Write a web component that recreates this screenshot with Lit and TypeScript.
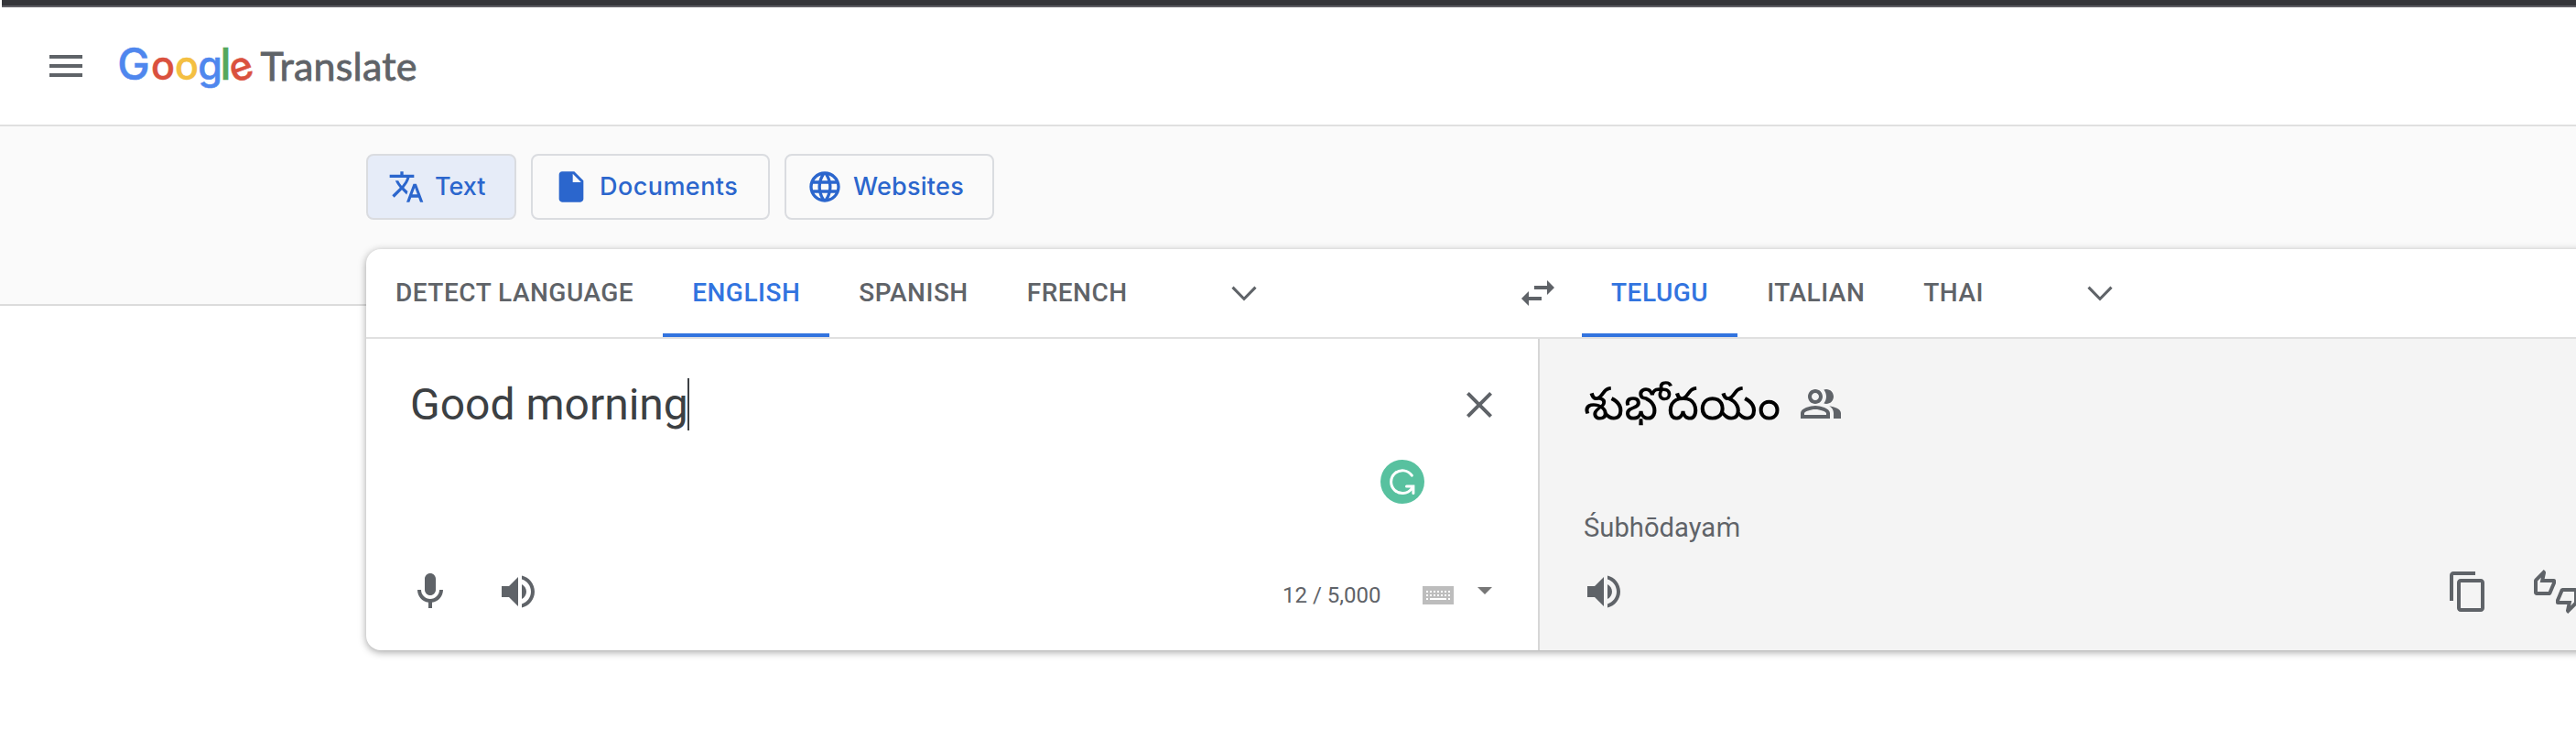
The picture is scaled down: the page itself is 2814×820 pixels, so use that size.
import { LitElement, html, svg, css } from "lit";
import { customElement, property } from "lit/decorators.js";

const ICONS: Record<string, string> = {
  menu: "M3 18h18v-2H3v2zm0-5h18v-2H3v2zm0-7v2h18V6H3z",
  translate:
    "M12.87 15.07l-2.54-2.51.03-.03c1.74-1.94 2.98-4.17 3.71-6.53H17V4h-7V2H8v2H1v1.99h11.17C11.5 7.92 10.44 9.75 9 11.35 8.07 10.32 7.3 9.19 6.69 8h-2c.73 1.63 1.73 3.17 2.98 4.56l-5.09 5.02L4 19l5-5 3.11 3.11.76-2.04zM18.5 10h-2L12 22h2l1.12-3h4.75L21 22h2l-4.5-12zm-2.62 7l1.62-4.33L19.12 17h-3.24z",
  doc: "M6 2c-1.1 0-1.99.9-1.99 2L4 20c0 1.1.89 2 1.99 2H18c1.1 0 2-.9 2-2V8l-6-6H6zm7 7V3.5L18.5 9H13z",
  globe:
    "M11.99 2C6.47 2 2 6.48 2 12s4.47 10 9.99 10C17.52 22 22 17.52 22 12S17.52 2 11.99 2zm6.93 6h-2.95c-.32-1.25-.78-2.45-1.38-3.56 1.84.63 3.37 1.91 4.33 3.56zM12 4.04c.83 1.2 1.48 2.53 1.91 3.96h-3.82c.43-1.43 1.08-2.76 1.91-3.96zM4.26 14C4.1 13.36 4 12.69 4 12s.1-1.36.26-2h3.38c-.08.66-.14 1.32-.14 2s.06 1.34.14 2H4.26zm.82 2h2.95c.32 1.25.78 2.45 1.38 3.56-1.84-.63-3.37-1.9-4.33-3.56zm2.95-8H5.08c.96-1.66 2.49-2.93 4.33-3.56C8.81 5.55 8.35 6.75 8.03 8zM12 19.96c-.83-1.2-1.48-2.53-1.91-3.96h3.82c-.43 1.43-1.08 2.76-1.91 3.96zM14.34 14H9.66c-.09-.66-.16-1.32-.16-2s.07-1.35.16-2h4.68c.09.65.16 1.32.16 2s-.07 1.34-.16 2zm.25 5.56c.6-1.11 1.06-2.31 1.38-3.56h2.95c-.96 1.65-2.49 2.93-4.33 3.56zM16.36 14c.08-.66.14-1.32.14-2s-.06-1.34-.14-2h3.38c.16.64.26 1.31.26 2s-.1 1.36-.26 2h-3.38z",
  swap: "M6.99 11L3 15l3.99 4v-3H14v-2H6.99v-3zM21 9l-3.99-4v3H10v2h7.01v3L21 9z",
  chevron: "M6.3 8.3L12 14.1l5.7-5.8 1.1 1.1L12 16.3 5.2 9.4z",
  close:
    "M19 6.41L17.59 5 12 10.59 6.41 5 5 6.41 10.59 12 5 17.59 6.41 19 12 13.41 17.59 19 19 17.59 13.41 12z",
  mic: "M12 14c1.66 0 3-1.34 3-3V5c0-1.66-1.34-3-3-3S9 3.34 9 5v6c0 1.66 1.34 3 3 3zM17 11c0 2.76-2.24 5-5 5s-5-2.24-5-5H5c0 3.53 2.61 6.43 6 6.92V21h2v-3.08c3.39-.49 6-3.39 6-6.92h-2z",
  speaker:
    "M3 9v6h4l5 5V4L7 9H3zm13.5 3c0-1.77-1.02-3.29-2.5-4.03v8.05c1.48-.73 2.5-2.25 2.5-4.02zM14 3.23v2.06c2.89.86 5 3.54 5 6.71s-2.11 5.85-5 6.71v2.06c4.01-.91 7-4.49 7-8.77s-2.99-7.86-7-8.77z",
  people:
    "M16.67 13.13C18.04 14.06 19 15.32 19 17v3h4v-3c0-2.18-3.57-3.47-6.33-3.87zM15 12c2.21 0 4-1.79 4-4s-1.79-4-4-4c-.47 0-.91.1-1.33.24C14.5 5.27 15 6.58 15 8s-.5 2.73-1.33 3.76c.42.14.86.24 1.33.24zM9 12c2.21 0 4-1.79 4-4s-1.79-4-4-4-4 1.79-4 4 1.79 4 4 4zm0-6c1.1 0 2 .9 2 2s-.9 2-2 2-2-.9-2-2 .9-2 2-2zM9 13c-2.67 0-8 1.34-8 4v3h16v-3c0-2.66-5.33-4-8-4zm6 5H3v-.99C3.2 16.29 6.3 15 9 15s5.8 1.29 6 2v1z",
  copy: "M16 1H4c-1.1 0-2 .9-2 2v14h2V3h12V1zm3 4H8c-1.1 0-2 .9-2 2v14c0 1.1.9 2 2 2h11c1.1 0 2-.9 2-2V7c0-1.1-.9-2-2-2zm0 16H8V7h11v14z",
  thumbs:
    "M12 6c0-.55-.45-1-1-1H5.82l.66-3.18.02-.23c0-.31-.13-.59-.33-.8L5.38 0 .44 4.94C.17 5.21 0 5.59 0 6v6.5c0 .83.67 1.5 1.5 1.5h6.75c.62 0 1.15-.38 1.38-.91l2.26-5.29c.07-.17.11-.36.11-.55V6zm-2 1.13L7.92 12H2V6.21l1.93-1.93L3.36 7H10v.13zM22.5 10h-6.75c-.62 0-1.15.38-1.38.91l-2.26 5.29c-.07.17-.11.36-.11.55V18c0 .55.45 1 1 1h5.18l-.66 3.18-.02.24c0 .31.13.59.33.8l.79.78 4.94-4.94c.27-.27.44-.65.44-1.06v-6.5c0-.83-.67-1.5-1.5-1.5zm-.5 7.79l-1.93 1.93.57-2.72H14v-.13L16.08 12H22v5.79z",
};

@customElement("gt-icon")
export class GtIcon extends LitElement {
  @property() name = "menu";

  static styles = css`
    :host {
      display: block;
      flex: none;
      width: 48px;
      height: 48px;
    }
    svg {
      display: block;
      width: 100%;
      height: 100%;
      fill: currentColor;
    }
  `;

  render() {
    return html`<svg viewBox="0 0 24 24"><path d=${ICONS[this.name]} /></svg>`;
  }
}

function keyColumn(i: number) {
  const x = 4 + i * 4;
  return svg`<rect x=${x} y="5" width="2" height="2" fill="#fff"/><rect x=${x} y="9" width="2" height="2" fill="#fff"/>${
    i === 0 || i === 6 ? svg`<rect x=${x} y="13" width="2" height="2" fill="#fff"/>` : ""
  }`;
}

@customElement("app-root")
export class AppRoot extends LitElement {
  static styles = css`
    :host {
      display: block;
      height: 820px;
      overflow: hidden;
      background: #fff;
      color: #5f6368;
      font-family: Roboto, "Noto Sans", sans-serif;
    }
    .topbar {
      box-sizing: border-box;
      height: 8px;
      margin-left: 2px;
      background: #35363a;
      border-bottom: 2px solid #5f5f65;
    }
    .header {
      box-sizing: border-box;
      height: 130px;
      display: flex;
      align-items: flex-start;
      padding: 40px 0 0 48px;
      border-bottom: 2px solid #e0e0e0;
    }
    .logo {
      flex: none;
      display: block;
      margin: -8px 0 0 24px;
    }
    .blue { fill: #4f87ee; stroke: #4f87ee; }
    .red { fill: #da513e; stroke: #da513e; }
    .yellow { fill: #f4bf42; stroke: #f4bf42; }
    .green { fill: #54a75c; stroke: #54a75c; }
    .logo-google {
      font: 500 43px Inter, sans-serif;
      stroke-width: 0.5px;
      text-anchor: middle;
    }
    .logo-tall {
      font-size: 47.5px;
    }
    .logo-product {
      font: 400 43px Lato, sans-serif;
      fill: #5f6368;
      stroke: #5f6368;
      stroke-width: 0.8px;
    }
    .band {
      box-sizing: border-box;
      height: 196px;
      background: #fafafa;
      border-bottom: 2px solid #dcdcdc;
      padding: 30px 0 0 400px;
    }
    .modes {
      display: flex;
      gap: 16px;
    }
    .mode {
      box-sizing: border-box;
      height: 72px;
      display: flex;
      align-items: center;
      gap: 11px;
      padding: 0 0 1px 22px;
      border: 2px solid #dadce0;
      border-radius: 8px;
      color: #2b66cd;
      font: 500 27px Inter, sans-serif;
      white-space: nowrap;
    }
    .mode gt-icon {
      width: 40px;
      height: 40px;
      margin-top: 1px;
    }
    .mode.text { width: 164px; background: #e6ecf8; }
    .mode.documents { width: 261px; letter-spacing: 0.45px; }
    .mode.websites { width: 229px; letter-spacing: 0.25px; }
    .card {
      box-sizing: border-box;
      position: relative;
      width: 2560px;
      height: 438px;
      margin: -62px 0 0 400px;
      background: #fff;
      border-radius: 16px;
      box-shadow: 0 2px 8px rgba(0, 0, 0, 0.37);
      overflow: hidden;
    }
    .languages {
      box-sizing: border-box;
      height: 98px;
      display: flex;
      border-bottom: 2px solid #e0e0e0;
    }
    .source-langs {
      display: flex;
      width: 1256px;
    }
    .target-langs {
      display: flex;
    }
    .tab {
      box-sizing: border-box;
      height: 96px;
      padding: 4px 32px 0;
      border-bottom: 4px solid transparent;
      font-size: 28px;
      font-weight: 500;
      line-height: 88px;
      letter-spacing: 0.5px;
      white-space: nowrap;
    }
    .tab.active {
      color: #3274df;
      border-color: #3274df;
    }
    .more {
      margin: 24px 0 0 71px;
    }
    .swap {
      margin: 24px 24px 0 0;
    }
    .panes {
      display: flex;
      height: 340px;
    }
    .pane {
      box-sizing: border-box;
      display: flex;
      flex-direction: column;
      justify-content: space-between;
      padding-bottom: 40px;
    }
    .source {
      width: 1282px;
      flex: none;
      border-right: 2px solid #d6d6d6;
      padding-left: 48px;
    }
    .target {
      flex: 1;
      background: #f4f4f4;
      padding-left: 48px;
    }
    .entry {
      display: flex;
      justify-content: space-between;
      padding: 43px 40px 0 0;
    }
    .typed {
      display: flex;
      height: 57px;
      color: #3c4043;
      font-size: 48px;
      line-height: 58px;
      white-space: nowrap;
    }
    .caret {
      width: 2px;
      height: 57px;
      margin-left: -1px;
      background: #3c4043;
    }
    .clear {
      margin-top: 5px;
    }
    .badge {
      position: absolute;
      left: 1108px;
      top: 230px;
      width: 48px;
      height: 48px;
    }
    .tools {
      display: flex;
      align-items: flex-start;
      height: 48px;
    }
    .tools .speak {
      margin-left: 48px;
    }
    .mic {
      margin-left: -2px;
    }
    .count {
      margin-left: 811px;
      width: 110px;
      font-size: 24px;
      line-height: 56px;
      letter-spacing: 0;
      white-space: nowrap;
    }
    .keyboard {
      margin: 18px 0 0 43px;
      flex: none;
    }
    .drop {
      margin: 19px 0 0 26px;
      flex: none;
    }
    .result {
      display: flex;
      height: 96px;
      padding-top: 43px;
    }
    .translated {
      width: 235px;
      flex: none;
      color: #000;
      font-size: 49.6px;
      line-height: 56px;
      white-space: nowrap;
    }
    .verified {
      margin-top: 4px;
    }
    .romanized {
      margin-top: 20px;
      font-size: 29.2px;
      line-height: 40px;
      white-space: nowrap;
    }
    .target .tools {
      margin-left: -2px;
    }
    .target .copy {
      margin-left: 896px;
    }
    .target .rate {
      margin-left: 48px;
    }
  `;

  private tabs(names: string[], active: string) {
    return names.map((n) => html`<div class="tab ${n === active ? "active" : ""}">${n}</div>`);
  }

  render() {
    const keys = [0, 1, 2, 3, 4, 5, 6];
    return html`
      <div class="topbar"></div>
      <div class="header">
        <gt-icon name="menu"></gt-icon>
        <svg class="logo" width="350" height="64" viewBox="120 40 350 64">
          <g class="logo-google">
            <text class="blue logo-tall" x="146" y="87.3">G</text>
            <text class="red" x="178" y="87.3">o</text>
            <text class="yellow" x="204" y="87.3">o</text>
            <text class="blue" x="229.5" y="87.3">g</text>
            <text class="green logo-tall" x="246.5" y="87.3">l</text>
            <text class="red" x="263.5" y="87.3" transform="rotate(-20 263.5 75.5)">e</text>
          </g>
          <text class="logo-product" x="284.5" y="88" textLength="171">Translate</text>
        </svg>
      </div>
      <div class="band">
        <div class="modes">
          <div class="mode text"><gt-icon name="translate"></gt-icon>Text</div>
          <div class="mode documents"><gt-icon name="doc"></gt-icon>Documents</div>
          <div class="mode websites"><gt-icon name="globe"></gt-icon>Websites</div>
        </div>
      </div>
      <div class="card">
        <div class="languages">
          <div class="source-langs">
            ${this.tabs(["DETECT LANGUAGE", "ENGLISH", "SPANISH", "FRENCH"], "ENGLISH")}
            <gt-icon class="more" name="chevron"></gt-icon>
          </div>
          <gt-icon class="swap" name="swap"></gt-icon>
          <div class="target-langs">
            ${this.tabs(["TELUGU", "ITALIAN", "THAI"], "TELUGU")}
            <gt-icon class="more" name="chevron"></gt-icon>
          </div>
        </div>
        <div class="panes">
          <div class="pane source">
            <div class="entry">
              <div class="typed">Good morning<span class="caret"></span></div>
              <gt-icon class="clear" name="close"></gt-icon>
            </div>
            <div class="tools">
              <gt-icon class="mic" name="mic"></gt-icon>
              <gt-icon class="speak" name="speaker"></gt-icon>
              <div class="count">12 / 5,000</div>
              <svg class="keyboard" width="34" height="20" viewBox="0 0 34 20">
                <rect width="34" height="20" fill="#bdbdbd" />
                ${keys.map((i) => keyColumn(i))}
                <rect x="8" y="13" width="18" height="2" fill="#fff" />
              </svg>
              <svg class="drop" width="16" height="8" viewBox="0 0 16 8">
                <path d="M0 0h16L8 8z" fill="#777" />
              </svg>
            </div>
          </div>
          <div class="pane target">
            <div class="result">
              <div class="translated">శుభోదయం</div>
              <gt-icon class="verified" name="people"></gt-icon>
            </div>
            <div class="romanized">Śubhōdayaṁ</div>
            <div class="tools">
              <gt-icon name="speaker"></gt-icon>
              <gt-icon class="copy" name="copy"></gt-icon>
              <gt-icon class="rate" name="thumbs"></gt-icon>
            </div>
          </div>
        </div>
        <svg class="badge" viewBox="0 0 48 48">
          <circle cx="24" cy="24" r="24" fill="#58c19f" />
          <path
            d="M34.3 17.2A12.4 12.4 0 1 0 33.8 31.8L35.5 29.3M28.5 29h7.4v7.4"
            fill="none" stroke="#fff" stroke-width="3" stroke-linecap="round"
          />
        </svg>
      </div>
    `;
  }
}
